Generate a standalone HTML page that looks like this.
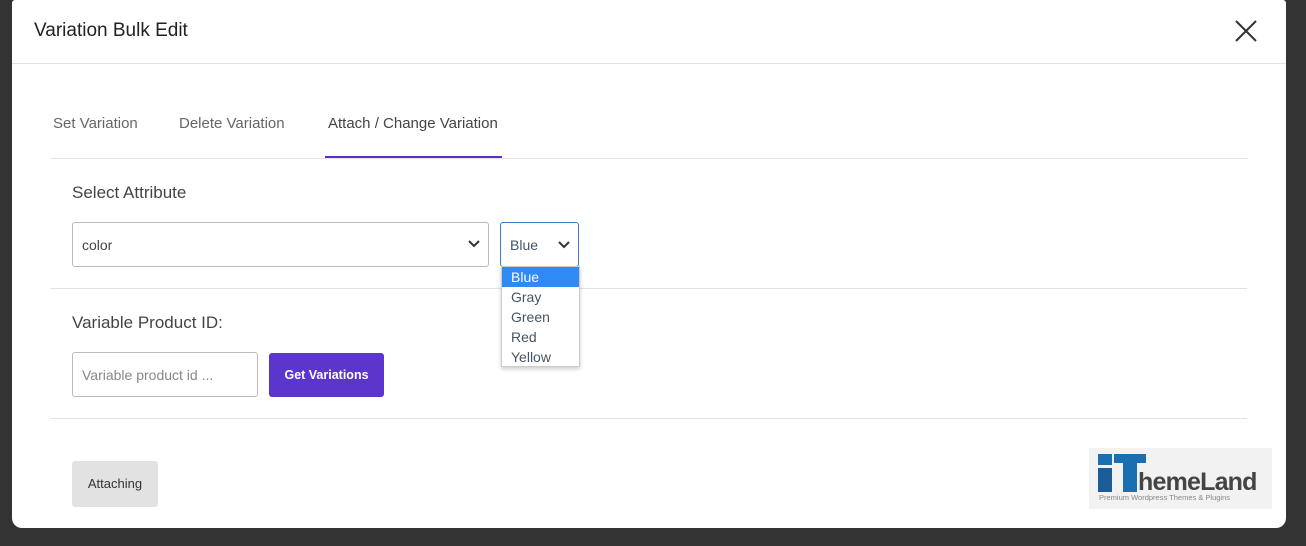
<!DOCTYPE html>
<html><head><style>
*{box-sizing:border-box;margin:0;padding:0}
body{width:1306px;height:546px;background:#333;font-family:"Liberation Sans",sans-serif;position:relative;overflow:hidden}
.m{position:absolute;left:12px;top:0;width:1274px;height:528px;background:#fff;border-radius:3px 3px 10px 10px}
.a{position:absolute}
.t{color:#555;font-size:15px}
.hr{position:absolute;height:1px;background:#e3e3e3}
.box{position:absolute;border:1px solid #bbb;border-radius:3px;background:#fff}
</style></head><body>
<div class="m"></div>
<div class="a" style="left:34px;top:20px;font-size:19px;color:#222">Variation Bulk Edit</div>
<svg class="a" style="left:1234px;top:19px" width="24" height="24"><path d="M2 2L22 22M22 2L2 22" stroke="#333" stroke-width="2"/></svg>
<div class="hr" style="left:12px;top:63px;width:1274px"></div>
<div class="a t" style="left:53px;top:115px;color:#666">Set Variation</div>
<div class="a t" style="left:179px;top:115px;color:#666">Delete Variation</div>
<div class="a t" style="left:328px;top:115px;color:#444">Attach / Change Variation</div>
<div class="a" style="left:325px;top:156px;width:177px;height:2px;background:#5c2fc9"></div>
<div class="hr" style="left:50px;top:158px;width:1197px"></div>
<div class="a" style="left:72px;top:183px;font-size:17px;color:#444">Select Attribute</div>
<div class="box" style="left:72px;top:222px;width:417px;height:45px"></div>
<div class="a" style="left:82px;top:237px;font-size:14px;color:#444">color</div>
<svg class="a" style="left:467px;top:239px" width="14" height="10"><path d="M2 2L7 7L12 2" fill="none" stroke="#333" stroke-width="2"/></svg>
<div class="box" style="left:500px;top:222px;width:79px;height:45px;border-color:#3a7bc8"></div>
<div class="a" style="left:510px;top:237px;font-size:14px;color:#456">Blue</div>
<svg class="a" style="left:557px;top:240px" width="14" height="10"><path d="M2 2L7 7L12 2" fill="none" stroke="#333" stroke-width="2"/></svg>
<div class="hr" style="left:50px;top:288px;width:1197px"></div>
<div class="a" style="left:501px;top:266px;width:79px;height:101px;background:#fff;border:1px solid #ccc;box-shadow:0 2px 4px rgba(0,0,0,.2);font-size:14px;color:#456;line-height:20px">
<div style="background:#2f8af5;color:#fff;padding-left:9px">Blue</div>
<div style="padding-left:9px">Gray</div><div style="padding-left:9px">Green</div><div style="padding-left:9px">Red</div><div style="padding-left:9px">Yellow</div></div>
<div class="a" style="left:72px;top:313px;font-size:17px;color:#444">Variable Product ID:</div>
<div class="box" style="left:72px;top:352px;width:186px;height:45px"></div>
<div class="a" style="left:82px;top:367px;font-size:14px;color:#888">Variable product id ...</div>
<div class="a" style="left:269px;top:353px;width:115px;height:44px;background:#5c35cc;border-radius:3px;color:#fff;font-size:12.5px;font-weight:bold;text-align:center;line-height:44px">Get Variations</div>
<div class="hr" style="left:50px;top:418px;width:1197px"></div>
<div class="a" style="left:72px;top:461px;width:86px;height:46px;background:#e2e2e2;border-radius:3px;font-size:13px;color:#333;text-align:center;line-height:46px">Attaching</div>
<div class="a" style="left:1089px;top:448px;width:183px;height:61px;background:#f2f2f2"></div>
<div class="a" style="left:1098px;top:454px;width:14px;height:11px;background:#1a6fb0"></div>
<div class="a" style="left:1098px;top:468px;width:14px;height:24px;background:#1a5d99"></div>
<div class="a" style="left:1114px;top:454px;width:32px;height:9px;background:#1a6fb0"></div>
<div class="a" style="left:1123px;top:463px;width:14px;height:29px;background:#1a6fb0"></div>
<div class="a" style="left:1138px;top:468px;font-size:25px;font-weight:bold;color:#444;letter-spacing:-0.8px">hemeLand</div>
<div class="a" style="left:1099px;top:493px;font-size:7.5px;color:#888">Premium Wordpress Themes &amp; Plugins</div>
</body></html>
